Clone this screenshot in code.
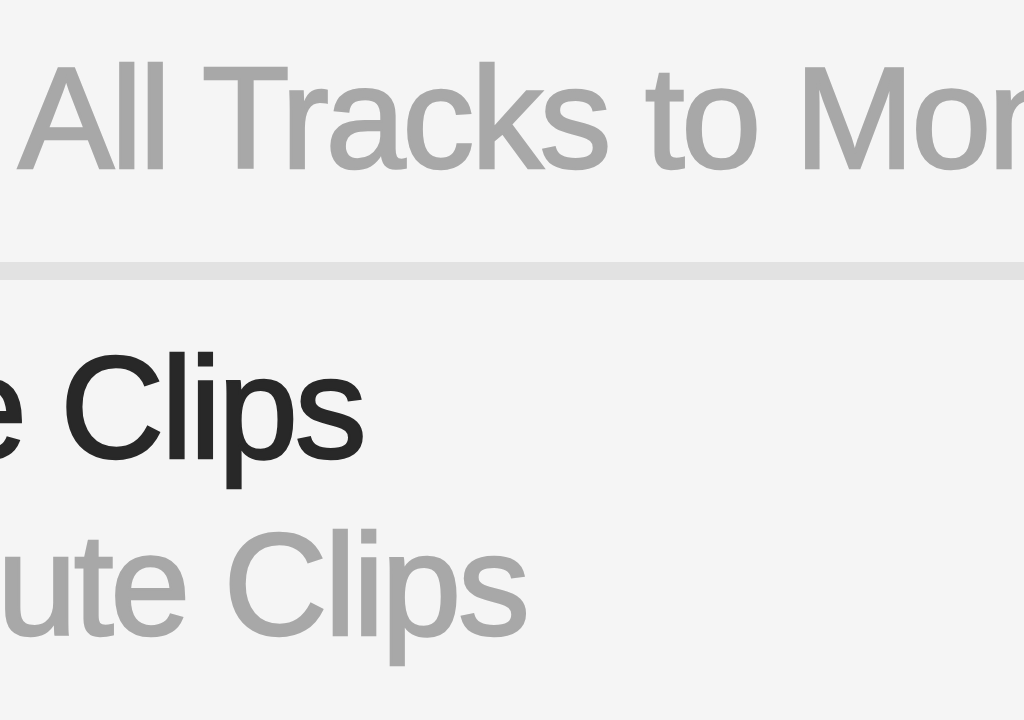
import React from 'react';

const App: React.FC = () => {
  return (
    <div className="w-[1024px] h-[720px] overflow-hidden bg-[#f5f5f5] pt-[30px] font-['Liberation_Sans',Arial,sans-serif] text-[144px] tracking-[-3.4px] whitespace-nowrap [-webkit-text-stroke-width:2.5px]">
      {/* Disabled item */}
      <div className="pl-[18px] leading-[177px] text-[#a8a8a8]">All Tracks to Mono</div>

      {/* Separator */}
      <div className="mt-[55px] h-[18px] bg-[#e2e2e2]"></div>

      {/* Enabled item */}
      <div className="mt-[40px] ml-[-53px] leading-[177px] text-[#282828]">e Clips</div>

      {/* Disabled item */}
      <div className="ml-[-3px] leading-[177px] text-[#a8a8a8]">ute Clips</div>
    </div>
  );
};

export default App;
